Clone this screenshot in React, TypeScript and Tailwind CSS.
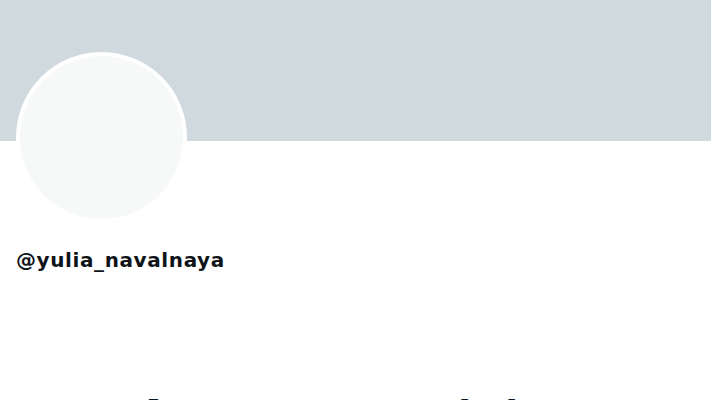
export default function App() {
  return (
    <div className="w-[711px] h-[400px] overflow-hidden bg-white" style={{ fontFamily: 'Inter, "Liberation Sans", sans-serif' }}>
      <div className="h-[141px] bg-[#cfd9de]" />
      <div className="px-4">
        <div className="-mt-[89px] w-[171px] h-[171px] rounded-full border-4 border-white bg-[#f7f9f9]" />
        <div
          className="mt-[24px] text-[20px] font-bold leading-[26px] tracking-[0.6px] text-[#0f1419]"
          style={{ fontFamily: '"DejaVu Sans", Inter, sans-serif' }}
        >
          @yulia_navalnaya
        </div>
      </div>
      <div className="mt-[117px] pl-[139px] text-[38px] font-extrabold leading-[46px] text-[#0f1419]">
        Account suspended
      </div>
    </div>
  )
}
